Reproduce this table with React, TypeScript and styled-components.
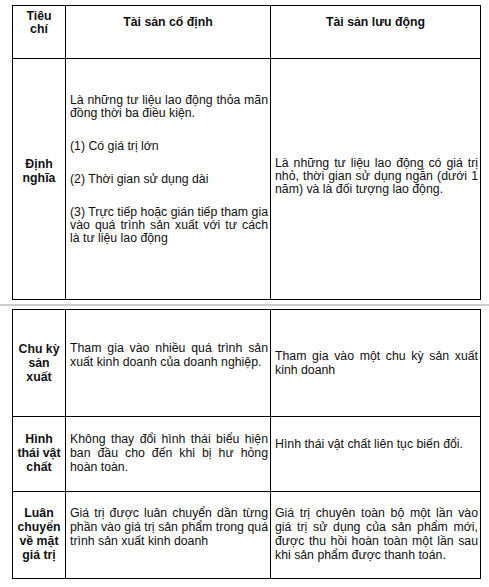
import React from "react";
import styled, { createGlobalStyle } from "styled-components";

const Global = createGlobalStyle`
  html, body { margin: 0; padding: 0; background: #fff; }
  body { font-family: "Liberation Sans", Arial, sans-serif; color: #111; }
`;

const Page = styled.div`
  width: 489px;
  padding-top: 5px;
`;

const Table = styled.div<{ $rows: string }>`
  display: grid;
  grid-template-columns: 53px 205px 210px;
  grid-template-rows: ${(p) => p.$rows};
  width: 468px;
  margin-left: 12px;
  border-top: 1px solid #000;
  border-left: 1px solid #000;
`;

const Cell = styled.div<{ $pb?: number }>`
  display: flex;
  flex-direction: column;
  justify-content: center;
  border-right: 1px solid #000;
  border-bottom: 1px solid #000;
  padding: 0 2px ${(p) => p.$pb ?? 0}px 4px;
  font-size: 12.3px;
  line-height: 13px;
  min-width: 0;
`;

const HeadCell = styled(Cell)`
  font-weight: bold;
  text-align: center;
  padding-left: 2px;
`;

const LabelCell = styled(Cell)`
  font-weight: bold;
  text-align: center;
  padding-left: 2px;
  line-height: 14px;
`;

const BodyCell = styled(Cell)<{ $lh?: number }>`
  text-align: justify;
  line-height: ${(p) => p.$lh ?? 14}px;
`;

const Para = styled.p<{ $mb?: number }>`
  margin: 0 0 ${(p) => p.$mb ?? 0}px 0;
`;

const Separator = styled.div`
  height: 2px;
  background: #cdcdcd;
  margin: 4px 0 3px 0;
`;

const Lines = ({ text }: { text: string[] }) => (
  <>
    {text.map((t, i) => (
      <React.Fragment key={i}>
        {t}
        {i < text.length - 1 && <br />}
      </React.Fragment>
    ))}
  </>
);

export default function App() {
  return (
    <Page>
      <Global />
      <Table $rows="53px 241px">
        <HeadCell $pb={19}>
          <Lines text={["Tiêu", "chí"]} />
        </HeadCell>
        <HeadCell $pb={19}>Tài sản cố định</HeadCell>
        <HeadCell $pb={19}>Tài sản lưu động</HeadCell>

        <LabelCell $pb={17}>
          <Lines text={["Định", "nghĩa"]} />
        </LabelCell>
        <BodyCell $lh={13}>
          <Para $mb={20}>
            Là những tư liệu lao động thỏa mãn đồng thời ba điều kiện.
          </Para>
          <Para $mb={20}>(1) Có giá trị lớn</Para>
          <Para $mb={20}>(2) Thời gian sử dụng dài</Para>
          <Para $mb={20}>
            (3) Trực tiếp hoặc gián tiếp tham gia vào quá trình sản xuất với tư
            cách là tư liệu lao động
          </Para>
        </BodyCell>
        <BodyCell $lh={13} $pb={5}>
          <Para>
            Là những tư liệu lao động có giá trị nhỏ, thời gian sử dụng ngắn
            (dưới 1 năm) và là đối tượng lao động.
          </Para>
        </BodyCell>
      </Table>

      <Separator />

      <Table $rows="107px 75px 87px">
        <LabelCell>
          <Lines text={["Chu kỳ", "sản", "xuất"]} />
        </LabelCell>
        <BodyCell $pb={17}>
          Tham gia vào nhiều quá trình sản xuất kinh doanh của doanh nghiệp.
        </BodyCell>
        <BodyCell>Tham gia vào một chu kỳ sản xuất kinh doanh</BodyCell>

        <LabelCell $pb={2}>
          <Lines text={["Hình", "thái vật", "chất"]} />
        </LabelCell>
        <BodyCell $pb={2}>
          Không thay đổi hình thái biểu hiện ban đầu cho đến khi bị hư hỏng
          hoàn toàn.
        </BodyCell>
        <BodyCell $pb={20}>Hình thái vật chất liên tục biến đổi.</BodyCell>

        <LabelCell $pb={2}>
          <Lines text={["Luân", "chuyển", "về mặt", "giá trị"]} />
        </LabelCell>
        <BodyCell $pb={17}>
          Giá trị được luân chuyển dần từng phần vào giá trị sản phẩm trong quá
          trình sản xuất kinh doanh
        </BodyCell>
        <BodyCell $pb={2}>
          Giá trị chuyên toàn bộ một lần vào giá trị sử dụng của sản phẩm mới,
          được thu hồi hoàn toàn một lần sau khi sản phẩm được thanh toán.
        </BodyCell>
      </Table>
    </Page>
  );
}
